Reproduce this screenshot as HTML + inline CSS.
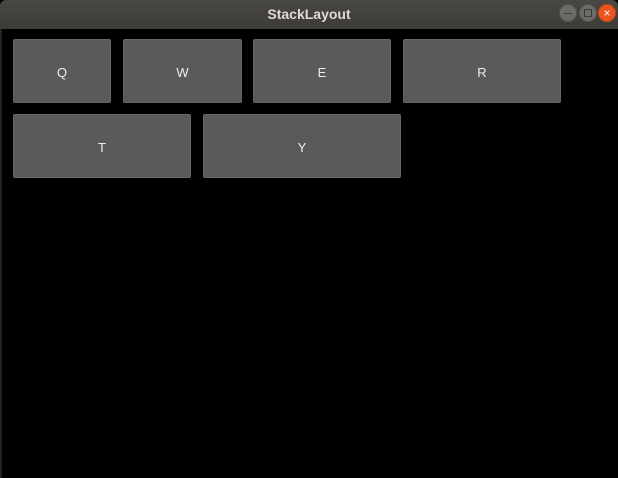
<!DOCTYPE html><html><head><style>
body{margin:0;width:618px;height:478px;background:#000;overflow:hidden;font-family:"Liberation Sans",sans-serif;position:relative}
.tb{position:absolute;left:0;top:0;width:618px;height:29px;background:linear-gradient(#4a4843,#3c3b37);border-radius:6px 6px 0 0}
.tt{position:absolute;top:6px;width:100%;text-align:center;color:#dfdbd2;font-weight:bold;font-size:14px}
.c{position:absolute;top:4px;width:18px;height:18px;border-radius:50%;background:#6d6b66;box-sizing:border-box;border:1px solid #56544f}
.b{position:absolute;background:#5a5a5a;border:1px solid #666;box-sizing:border-box;border-radius:2px;color:#eee;font-size:13px;display:flex;align-items:center;justify-content:center;padding-top:3px}
</style></head><body>
<div class="tb"><div class="tt">StackLayout</div>
<div class="c" style="left:559px"><div style="position:absolute;left:4px;top:8px;width:8px;height:1px;background:#3c3b37"></div></div>
<div class="c" style="left:579px"><div style="position:absolute;left:4px;top:4px;width:6px;height:6px;border:1px solid #3c3b37"></div></div>
<div class="c" style="left:598px;background:#e95420;border-color:#c74418;color:#fff;font-size:12px;line-height:16px;text-align:center">×</div>
</div>
<div style="position:absolute;left:0;top:29px;width:2px;height:449px;background:#222"></div>
<div class="b" style="left:13px;top:39px;width:98px;height:64px">Q</div>
<div class="b" style="left:123px;top:39px;width:119px;height:64px">W</div>
<div class="b" style="left:253px;top:39px;width:138px;height:64px">E</div>
<div class="b" style="left:403px;top:39px;width:158px;height:64px">R</div>
<div class="b" style="left:13px;top:114px;width:178px;height:64px">T</div>
<div class="b" style="left:203px;top:114px;width:198px;height:64px">Y</div>
</body></html>
